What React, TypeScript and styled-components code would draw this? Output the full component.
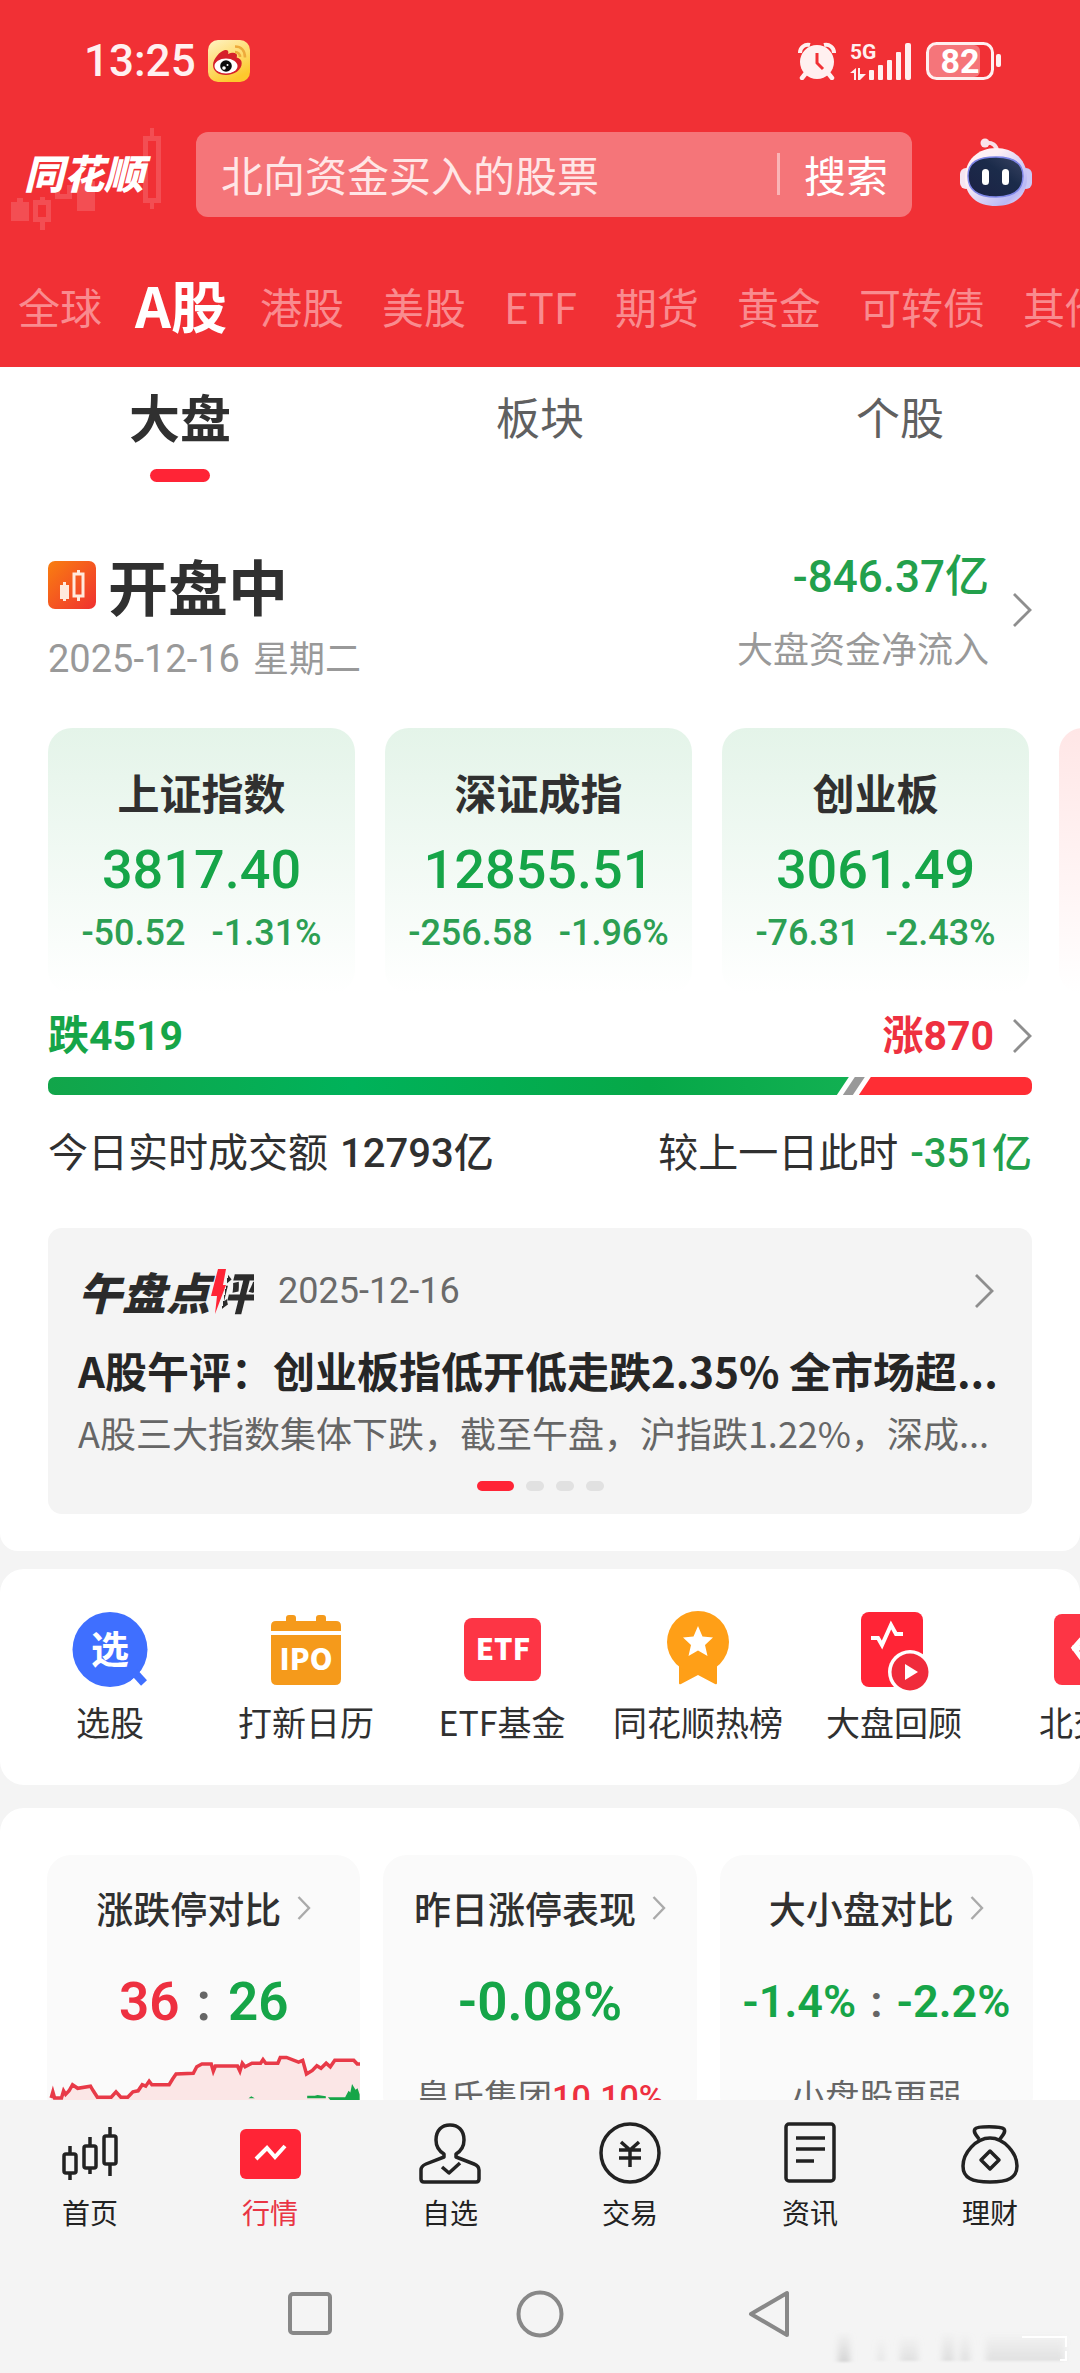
import React from 'react';
import styled, { createGlobalStyle, css } from 'styled-components';

const CJK = `'Noto Sans CJK SC', 'Liberation Sans', sans-serif`;
const NUM = `Roboto, 'Noto Sans CJK SC', sans-serif`;
const RED = '#ff2436';
const UP = '#ee3040';
const DOWN = '#16a548';
const INK = '#303030';

const GlobalStyle = createGlobalStyle`
  * { box-sizing: border-box; }
  body { margin: 0; background: #f4f4f4; font-family: ${CJK}; color: ${INK}; }
  button, input { font: inherit; color: inherit; border: 0; padding: 0; margin: 0; background: none; }
  button { cursor: pointer; }
  a { color: inherit; text-decoration: none; }
  h1, h2, p { margin: 0; }
  svg { display: block; }
`;

const Screen = styled.div`
  display: grid;
  grid-template-rows: auto minmax(0, 1fr) auto;
  height: 100vh;
  overflow: hidden;
`;

/* ---------- header ---------- */

const Header = styled.header`
  background: #f13035;
  color: #fff;
  overflow: hidden;
`;

const StatusBar = styled.div`
  display: flex;
  align-items: center;
  height: 122px;
  margin-bottom: 10px;
  padding: 0 77px 0 84px;
  color: #fff0f0;
`;

const Clock = styled.time`
  font: 500 44px/48px ${NUM};
  margin-right: 12px;
`;

const StatusIcons = styled.div`
  display: flex;
  align-items: center;
  gap: 14px;
  margin-left: auto;
`;

const SearchRow = styled.div`
  display: flex;
  align-items: center;
  height: 85px;
`;

const Brand = styled.a`
  position: relative;
  flex: 0 0 196px;
  padding: 0 0 6px 24px;
  font-size: 40px;
  line-height: 48px;
  font-weight: 900;
  font-style: italic;
`;

const BrandCandles = styled.svg`
  position: absolute;
  left: 0;
  top: -21px;
`;

const BrandName = styled.span`
  position: relative;
`;

const SearchForm = styled.form`
  display: flex;
  flex: 1;
  align-items: center;
  height: 85px;
  min-width: 0;
  padding: 0 24px 2px 25px;
  border-radius: 12px;
  background: #f57579;
  font-size: 42px;
  line-height: 60px;
`;

const SearchInput = styled.input`
  flex: 1;
  min-width: 0;
  outline: none;
  &::placeholder { color: #ffe6e6; opacity: 1; }
`;

const SearchButton = styled.button`
  display: flex;
  align-items: center;
  &::before {
    content: '';
    width: 3px;
    height: 42px;
    margin-right: 24px;
    background: #fab4b6;
  }
`;

const RobotButton = styled.button`
  display: flex;
  flex: 0 0 168px;
  justify-content: center;
  padding-bottom: 6px;
`;

const MarketTabs = styled.nav`
  display: flex;
  align-items: center;
  gap: 38px;
  height: 150px;
  padding: 28px 0 0 18px;
  white-space: nowrap;
`;

const MarketTab = styled.button<{ $active?: boolean }>`
  flex: none;
  font-size: 42px;
  line-height: 60px;
  color: #f98b8f;
  ${(p) => p.$active && css`
    margin: 0 -5px;
    padding-bottom: 4px;
    font-size: 56px;
    font-weight: 700;
    color: #fff;
  `}
`;

/* ---------- content ---------- */

const Content = styled.main`
  overflow: hidden;
`;

const Overview = styled.section`
  padding-bottom: 37px;
  border-radius: 0 0 18px 18px;
  background: #fff;
`;

const SubTabs = styled.nav`
  display: grid;
  grid-template-columns: repeat(3, 1fr);
`;

const SubTab = styled.button<{ $active?: boolean }>`
  display: flex;
  flex-direction: column;
  align-items: center;
  padding-top: 19px;
  font-size: ${(p) => (p.$active ? 51 : 44)}px;
  line-height: 60px;
  font-weight: ${(p) => (p.$active ? 700 : 400)};
  color: ${(p) => (p.$active ? INK : '#606060')};
  &::after {
    content: '';
    width: 60px;
    height: 13px;
    margin-top: 23px;
    border-radius: 7px;
    background: ${(p) => (p.$active ? RED : 'transparent')};
  }
`;

const SessionRow = styled.div`
  display: flex;
  align-items: flex-start;
  justify-content: space-between;
  padding: 71px 48px 49px;
`;

const SessionTitle = styled.div`
  display: flex;
  align-items: center;
  gap: 12px;
  margin-bottom: 19px;
  h1 { font-size: 60px; line-height: 64px; font-weight: 700; }
`;

const Caption = styled.p`
  font: 400 36px/40px ${CJK};
  color: #999;
`;

const DateText = styled.time`
  margin-right: 5px;
  font-family: ${NUM};
  font-size: 38px;
`;

const FlowLink = styled.a`
  display: flex;
  align-items: center;
  gap: 23px;
  text-align: right;
`;

const FlowAmount = styled.p`
  margin-bottom: 26px;
  font: 500 44px/48px ${NUM};
  color: #23a04c;
`;

const IndexStrip = styled.div`
  display: flex;
  gap: 30px;
  padding-left: 48px;
  overflow: hidden;
`;

const IndexCard = styled.a<{ $rising?: boolean }>`
  flex: 0 0 calc((100vw - 159px) / 3);
  padding: 40px 0 41px;
  border-radius: 24px;
  background: linear-gradient(${(p) => (p.$rising ? '#ffe6e6' : '#e4f4e9')}, #fff);
  text-align: center;
  white-space: nowrap;
`;

const IndexName = styled.h2`
  font-size: 42px;
  line-height: 48px;
  font-weight: 700;
`;

const IndexValue = styled.p`
  margin: 24px 0 13px;
  font: 500 54px/60px ${NUM};
  color: ${DOWN};
`;

const IndexChange = styled.p`
  display: flex;
  justify-content: center;
  gap: 26px;
  font: 500 36px/40px ${NUM};
  color: #2c9f53;
`;

const Breadth = styled.a`
  display: block;
  padding: 20px 48px 0;
`;

const BreadthLabels = styled.div`
  display: flex;
  align-items: center;
  justify-content: space-between;
  margin-bottom: 19px;
  font: 700 41px/44px ${NUM};
`;

const Tone = styled.span<{ $up?: boolean }>`
  color: ${(p) => (p.$up ? UP : DOWN)};
`;

const RisingLabel = styled.span`
  display: flex;
  align-items: center;
  gap: 18px;
`;

const BreadthBar = styled.div`
  display: flex;
  height: 18px;
  border-radius: 7px;
  overflow: hidden;
`;

const FallingPart = styled.i`
  flex: 800 1 0;
  background: linear-gradient(90deg, #12a54a, #00b25a 38%, #06a848 75%, #12b052);
  clip-path: polygon(0 0, 100% 0, calc(100% - 12px) 100%, 0 100%);
`;

const FlatPart = styled.i`
  flex: none;
  width: 22px;
  margin: 0 -6px;
  background: #999;
  clip-path: polygon(12px 0, 100% 0, 10px 100%, 0 100%);
`;

const RisingPart = styled.i`
  flex: 173 1 0;
  background: #ff2d34;
  clip-path: polygon(12px 0, 100% 0, 100% 100%, 0 100%);
`;

const Turnover = styled.div`
  display: flex;
  justify-content: space-between;
  padding: 31px 48px 50px;
  font-size: 40px;
  line-height: 48px;
  white-space: nowrap;
`;

const TurnoverValue = styled.strong<{ $down?: boolean }>`
  margin-left: 3px;
  font-family: ${NUM};
  font-weight: 500;
  color: ${(p) => (p.$down ? '#23a04c' : INK)};
`;

const Review = styled.article`
  margin: 0 48px;
  padding: 39px 30px 23px;
  border-radius: 14px;
  background: #f4f4f4;
`;

const ReviewTop = styled.div`
  display: flex;
  align-items: center;
  height: 48px;
  padding-right: 8px;
`;

const ReviewMark = styled.strong`
  position: relative;
  margin-right: 24px;
  font-size: 44px;
  line-height: 48px;
  font-weight: 900;
  font-style: italic;
  color: #2b2b2b;
`;

const ReviewMarkEnd = styled.span`
  display: inline-block;
  background: linear-gradient(100deg, transparent 37%, #2b2b2b 37%);
  background-clip: text;
  -webkit-background-clip: text;
  color: transparent;
`;

const Bolt = styled.svg`
  position: absolute;
  right: 27px;
  top: 2px;
`;

const ReviewDate = styled.time`
  flex: 1;
  font: 400 36px/44px ${NUM};
  color: #6a6a6a;
`;

const Headline = styled.h2`
  margin: 31px 0 16px;
  font-size: 42px;
  line-height: 48px;
  font-weight: 700;
  white-space: nowrap;
  color: #262626;
`;

const Summary = styled.p`
  font-size: 36px;
  line-height: 44px;
  white-space: nowrap;
  color: #666;
`;

const Pager = styled.div`
  display: flex;
  justify-content: center;
  gap: 12px;
  margin-top: 27px;
`;

const Dot = styled.i<{ $active?: boolean }>`
  width: ${(p) => (p.$active ? 37 : 18)}px;
  height: 10px;
  border-radius: 5px;
  background: ${(p) => (p.$active ? RED : '#e1e1e1')};
`;

const QuickPanel = styled.nav`
  display: flex;
  margin-top: 18px;
  padding: 41px 0 41px 12px;
  border-radius: 24px;
  background: #fff;
  overflow: hidden;
`;

const QuickLink = styled.a`
  display: flex;
  flex: 0 0 calc((100vw - 100px) / 5);
  flex-direction: column;
  align-items: center;
  gap: 10px;
  font-size: 34px;
  line-height: 44px;
  white-space: nowrap;
`;

const MetricPanel = styled.section`
  display: grid;
  grid-template-columns: repeat(3, minmax(0, 1fr));
  gap: 23px;
  margin-top: 23px;
  padding: 47px 47px 60px;
  border-radius: 24px 24px 0 0;
  background: #fff;
`;

const MetricCard = styled.a`
  display: flex;
  flex-direction: column;
  align-items: center;
  padding-top: 31px;
  border-radius: 24px;
  background: #fafafa;
  white-space: nowrap;
`;

const MetricTitle = styled.h2`
  display: flex;
  align-items: center;
  gap: 16px;
  font-size: 37px;
  line-height: 44px;
  font-weight: 500;
`;

const MetricValue = styled.p<{ $small?: boolean }>`
  display: flex;
  gap: ${(p) => (p.$small ? 14 : 17)}px;
  margin-top: 42px;
  font: 600 ${(p) => (p.$small ? 45 : 53)}px/60px ${NUM};
  color: #666;
`;

const MetricNote = styled.p`
  margin-top: 41px;
  font-size: 34px;
  line-height: 44px;
  color: #666;
  strong { font-family: ${NUM}; font-weight: 500; color: ${UP}; }
`;

const TrendChart = styled.svg`
  width: 100%;
  height: 66px;
  margin-top: 19px;
`;

/* ---------- bottom ---------- */

const Footer = styled.footer`
  position: relative;
  background: #f4f4f4;
`;

const TabBar = styled.nav`
  display: grid;
  grid-template-columns: repeat(6, 1fr);
  padding-top: 21px;
`;

const TabItem = styled.a<{ $active?: boolean }>`
  display: flex;
  flex-direction: column;
  align-items: center;
  gap: 11px;
  font-size: 28px;
  line-height: 32px;
  color: ${(p) => (p.$active ? '#e93544' : '#222')};
`;

const SystemBar = styled.div`
  display: flex;
  justify-content: center;
  gap: 182px;
  padding: 62px 0 35px;
`;

const Smudge = styled.svg`
  position: absolute;
  right: 8px;
  bottom: 8px;
`;

/* ---------- drawings ---------- */

const Chevron = ({ small }: { small?: boolean }) => small ? (
  <svg width="14" height="24" viewBox="0 0 14 24" fill="none" stroke="#aaa" strokeWidth="2.4"><path d="M1.5 1 12 12 1.5 23" /></svg>
) : (
  <svg width="20" height="34" viewBox="0 0 20 34" fill="none" stroke="#8e8e8e" strokeWidth="2.8"><path d="M2 1 18 17 2 33" /></svg>
);

const WeiboIcon = () => (
  <svg width="42" height="42" viewBox="0 0 42 42">
    <defs><linearGradient id="wb" x1="0" y1="0" x2="0.5" y2="1"><stop offset="0" stopColor="#fff3c4" /><stop offset="1" stopColor="#fdc92d" /></linearGradient></defs>
    <rect width="42" height="42" rx="10" fill="url(#wb)" />
    <path d="M5 25c0-6 7-14 12-15 3-.6 4 1.500 3 4 4-2 9-2 9 1.500 0 1-.3 1.500-.3 2 3 .8 5 2.500 5 5.500C34 30 26 35 18 35 10 35 5 31 5 25Z" fill="#d6202a" />
    <ellipse cx="18" cy="26" rx="11.500" ry="7.500" fill="#fff" />
    <circle cx="18" cy="26" r="5.800" fill="#0a0a0a" /><circle cx="16" cy="28" r="1.800" fill="#fff" /><circle cx="19.500" cy="25" r="1" fill="#fff" />
    <path d="M27 6.500c6 0 10 4 10 11M27 12c3 0 5 2 5 5" fill="none" stroke="#edaa3c" strokeWidth="2.600" />
  </svg>
);

const AlarmIcon = () => (
  <svg width="38" height="38" viewBox="0 0 38 38" fill="none">
    <path d="M2 11A8 8 0 0 1 12 3M36 11A8 8 0 0 0 26 3" stroke="#fff0f0" strokeWidth="4" />
    <circle cx="19" cy="20" r="17" fill="#fff0f0" />
    <path d="m8 31-4 5M30 31l4 5" stroke="#fff0f0" strokeWidth="4.500" strokeLinecap="round" />
    <path d="M19 11v10l6 6" stroke="#f13035" strokeWidth="3" />
  </svg>
);

const SignalIcon = () => (
  <svg width="62" height="40" viewBox="0 0 62 40" fill="#fff0f0">
    <text x="0" y="18" fontFamily="Roboto, sans-serif" fontWeight="700" fontSize="21">5G</text>
    <path d="M0 32 6 27v12H4v-7ZM8 27h2v6h6l-6 6H8Z" />
    <rect x="19" y="29" width="5" height="10" rx="1" /><rect x="28" y="24" width="5" height="15" rx="1" />
    <rect x="37" y="19" width="5" height="20" rx="1" /><rect x="46" y="11" width="5" height="28" rx="1" /><rect x="55" y="2" width="6" height="37" rx="2" />
  </svg>
);

const BatteryIcon = () => (
  <svg width="77" height="38" viewBox="0 0 77 38">
    <rect x="3" y="3" width="51" height="32" rx="6" fill="#f5757a" />
    <rect x="1.500" y="1.500" width="65" height="35" rx="9" fill="none" stroke="#fff0f0" strokeWidth="3" />
    <rect x="70" y="12" width="5" height="13" rx="2" fill="#fff0f0" />
    <text x="34" y="31" textAnchor="middle" fontFamily="Roboto, sans-serif" fontWeight="700" fontSize="34" fill="#fff">82</text>
  </svg>
);

const RobotIcon = () => (
  <svg width="74" height="70" viewBox="0 0 74 70">
    <defs>
      <linearGradient id="rb" x1="0" y1="0" x2="1" y2="1"><stop offset="0.300" stopColor="#fff0f5" /><stop offset="0.800" stopColor="#b9b8f5" /><stop offset="1" stopColor="#fbe3ee" /></linearGradient>
      <linearGradient id="rv" x1="0" y1="1" x2="1" y2="0"><stop offset="0" stopColor="#1c2144" /><stop offset="0.600" stopColor="#1b2b4a" /><stop offset="1" stopColor="#3a4463" /></linearGradient>
    </defs>
    <path d="M26 6c7-1 12 2 12 9" fill="none" stroke="#f8dfe8" strokeWidth="4" /><circle cx="26" cy="6" r="4.500" fill="#fae3ea" />
    <rect x="1" y="31" width="12" height="21" rx="6" fill="#f5e5f2" /><rect x="61" y="31" width="12" height="21" rx="6" fill="#cbc8f6" />
    <path d="M37 11C55 11 68 23 68 41S56 69 37 69 6 59 6 41 19 11 37 11Z" fill="url(#rb)" />
    <path d="M37 20c18 0 27 6 27 19s-8 21-27 21S9 53 9 39s10-19 28-19Z" fill="url(#rv)" stroke="#7f86e8" strokeWidth="1.500" />
    <rect x="23" y="32" width="7" height="16" rx="3.500" fill="#fff" /><rect x="43" y="32" width="7" height="16" rx="3.500" fill="#fff" />
  </svg>
);

const CandlesIcon = () => (
  <svg width="48" height="48" viewBox="0 0 48 48">
    <defs><linearGradient id="cd" x1="0" y1="0" x2="1" y2="1"><stop offset="0" stopColor="#f97f10" /><stop offset="1" stopColor="#f03030" /></linearGradient></defs>
    <rect width="48" height="48" rx="7" fill="url(#cd)" />
    <path d="M12 24h9v14h-9ZM15 21h3v19h-3ZM29 9h3v4h-3ZM29 36h3v4h-3Z" fill="#ffe9dc" />
    <rect x="26" y="13" width="9" height="22" fill="none" stroke="#ffe9dc" strokeWidth="3" />
  </svg>
);

const iconText = { fontFamily: "'Noto Sans CJK SC', sans-serif", textAnchor: 'middle' as const, fill: '#fff' };

const QuickPickIcon = () => (
  <svg width="80" height="80" viewBox="0 0 80 80">
    <ellipse cx="40" cy="39.500" rx="37.500" ry="37.500" fill="#3f6fff" />
    <path d="m66 66 8 8" stroke="#fff" strokeWidth="14" /><path d="m64 62 10 11" stroke="#3f6fff" strokeWidth="8" />
    <text x="40" y="53" fontWeight="700" fontSize="38" {...iconText}>选</text>
  </svg>
);
const IpoIcon = () => (
  <svg width="80" height="80" viewBox="0 0 80 80">
    <path d="M5 21v-5q0-5 5-5h10V8q0-3 3-3h4q3 0 3 3v3h20V8q0-3 3-3h4q3 0 3 3v3h10q5 0 5 5v5Z" fill="#f59a1b" />
    <path d="M5 25h70v44q0 6-6 6H11q-6 0-6-6Z" fill="#f59a1b" />
    <text x="40" y="60" fontWeight="900" fontSize="29" {...iconText}>IPO</text>
  </svg>
);
const EtfIcon = () => (
  <svg width="80" height="80" viewBox="0 0 80 80">
    <rect x="2" y="8" width="77" height="63" rx="8" fill="#fd3545" />
    <text x="41" y="50" fontWeight="900" fontSize="29" {...iconText}>ETF</text>
  </svg>
);
const MedalIcon = () => (
  <svg width="80" height="80" viewBox="0 0 80 80">
    <path d="M21 50v23q0 2 2 1l17-9 17 9q2 1 2-1V50Z" fill="#ff9f17" /><circle cx="40" cy="32" r="31" fill="#ff9f17" />
    <path d="m40 16 4.500 10.500L55 27.500l-8 7.500 2.500 11L40 40.500 30.500 46 33 35l-8-7.500 10.500-1Z" fill="#fff" />
  </svg>
);
const ReplayIcon = () => (
  <svg width="80" height="80" viewBox="0 0 80 80" overflow="visible">
    <rect x="7" y="2" width="62" height="75" rx="8" fill="#ff2436" />
    <path d="M17 28h7l4 7 9-20 5 9h7" fill="none" stroke="#fff" strokeWidth="4" />
    <circle cx="56" cy="62" r="22" fill="#fff" /><circle cx="56" cy="62" r="18.500" fill="#f02b3b" />
    <path d="m51 54 13 8-13 8Z" fill="#fff" />
  </svg>
);
const NorthIcon = () => (
  <svg width="80" height="80" viewBox="0 0 80 80">
    <rect x="4" y="4" width="72" height="71" rx="8" fill="#fd3545" />
    <path d="M38 22 24 38l14 19M22 38h16" fill="none" stroke="#fff" strokeWidth="5" />
  </svg>
);

const line = { fill: 'none', stroke: '#222', strokeWidth: 3.5, strokeLinejoin: 'round' as const };
const box = { width: 64, height: 64, viewBox: '0 0 64 64' };

const HomeIcon = () => (
  <svg {...box} {...line}>
    <rect x="6" y="33" width="12" height="19" rx="2" /><path d="M12 25v8M12 52v7" />
    <rect x="26" y="25" width="12" height="22" rx="2" /><path d="M32 16v9M32 47v6" />
    <rect x="46" y="15" width="12" height="28" rx="2" /><path d="M52 6v9M52 43v12" />
  </svg>
);
const QuoteIcon = () => (
  <svg {...box}>
    <rect x="2" y="8" width="61" height="50" rx="6" fill={RED} />
    <path d="m18 38 11-11 8 9 10-11" fill="none" stroke="#fff" strokeWidth="4" />
  </svg>
);
const PersonIcon = () => (
  <svg {...box} {...line}>
    <path d="M26 33c-5-3-8-8-8-14C18 9 24 4 32 4s14 5 14 15c0 6-3 11-8 14v3l18 7q5 2 5 6v9q0 3-3 3H6q-3 0-3-3v-9q0-4 5-6l18-7Z" />
    <path d="m24 46 7 6 11-10" />
  </svg>
);
const TradeIcon = () => (
  <svg {...box} {...line}>
    <circle cx="32" cy="32" r="29" /><path d="m23 21 9 8 9-8M21 29h22M21 37h22M32 29v17" />
  </svg>
);
const NewsIcon = () => (
  <svg {...box} {...line}>
    <rect x="8" y="3" width="48" height="57" rx="3" /><path d="M18 17h29M18 28h29M18 40h18" />
  </svg>
);
const WealthIcon = () => (
  <svg {...box} {...line}>
    <path d="M21 18c-3-4-6-7-4-10 2-3 26-3 29 0 2 3-1 6-4 10M32 17c14 0 27 15 27 28 0 12-9 16-27 16S5 57 5 45c0-13 13-28 27-28Z" />
    <path d="m32 30 9 9-9 9-9-9Z" />
  </svg>
);

const indices = [
  { name: '上证指数', value: '3817.40', diff: '-50.52', pct: '-1.31%' },
  { name: '深证成指', value: '12855.51', diff: '-256.58', pct: '-1.96%' },
  { name: '创业板', value: '3061.49', diff: '-76.31', pct: '-2.43%' },
];

const quickLinks = [
  { label: '选股', Icon: QuickPickIcon },
  { label: '打新日历', Icon: IpoIcon },
  { label: 'ETF基金', Icon: EtfIcon },
  { label: '同花顺热榜', Icon: MedalIcon },
  { label: '大盘回顾', Icon: ReplayIcon },
  { label: '北交所', Icon: NorthIcon },
];

const tabs = [
  { label: '首页', Icon: HomeIcon },
  { label: '行情', Icon: QuoteIcon, active: true },
  { label: '自选', Icon: PersonIcon },
  { label: '交易', Icon: TradeIcon },
  { label: '资讯', Icon: NewsIcon },
  { label: '理财', Icon: WealthIcon },
];

const trend = 'M148 805 153 788 158 805H178L184 785 190 795 200 785 210 768 225 778 262 772 270 785 282 803H322L336 788 350 803H370L385 788 400 785 412 768 422 772 432 758 440 768H490L500 752 510 738 560 736 570 718 585 710H612L618 730 624 716H688L695 730 702 708 710 718 730 708H755L762 698 770 708H805L812 692H830L865 705 877 700 888 738 905 728 918 715 930 722 945 708 957 718 970 700H1025L1035 710H1044';

export default function App() {
  return (
    <Screen>
      <GlobalStyle />
      <Header>
        <StatusBar>
          <Clock>13:25</Clock>
          <WeiboIcon />
          <StatusIcons><AlarmIcon /><SignalIcon /><BatteryIcon /></StatusIcons>
        </StatusBar>
        <SearchRow>
          <Brand href="#">
            <BrandCandles width="170" height="86" viewBox="0 126 170 86" fill="#fff" fillOpacity="0.15" overflow="visible">
              <path d="M11 201h18v19H11ZM17 197h6v4h-6ZM77 180h18v30H77ZM55 184h5v9h7v-9h5v14H55ZM40 196h5v3h-5ZM40 221h5v8h-5ZM150 127h4v8h-4ZM150 202h4v6h-4Z" />
              <path fillRule="evenodd" d="M33 199h18v22H33ZM38 204v12h8v-12ZM143 135h18v67h-18ZM148 140v57h8v-57Z" />
            </BrandCandles>
            <BrandName>同花顺</BrandName>
          </Brand>
          <SearchForm onSubmit={(e) => e.preventDefault()}>
            <SearchInput aria-label="搜索" placeholder="北向资金买入的股票" />
            <SearchButton type="submit">搜索</SearchButton>
          </SearchForm>
          <RobotButton aria-label="智能助手"><RobotIcon /></RobotButton>
        </SearchRow>
        <MarketTabs>
          {['全球', 'A股', '港股', '美股', 'ETF', '期货', '黄金', '可转债', '其他'].map((t) => (
            <MarketTab key={t} $active={t === 'A股'}>{t}</MarketTab>
          ))}
        </MarketTabs>
      </Header>

      <Content>
        <Overview>
          <SubTabs>
            <SubTab $active>大盘</SubTab>
            <SubTab>板块</SubTab>
            <SubTab>个股</SubTab>
          </SubTabs>

          <SessionRow>
            <div>
              <SessionTitle><CandlesIcon /><h1>开盘中</h1></SessionTitle>
              <Caption><DateText>2025-12-16</DateText> 星期二</Caption>
            </div>
            <FlowLink href="#">
              <div>
                <FlowAmount>-846.37亿</FlowAmount>
                <Caption>大盘资金净流入</Caption>
              </div>
              <Chevron />
            </FlowLink>
          </SessionRow>

          <IndexStrip>
            {indices.map((x) => (
              <IndexCard key={x.name} href="#">
                <IndexName>{x.name}</IndexName>
                <IndexValue>{x.value}</IndexValue>
                <IndexChange><span>{x.diff}</span><span>{x.pct}</span></IndexChange>
              </IndexCard>
            ))}
            <IndexCard $rising href="#" aria-label="更多指数" />
          </IndexStrip>

          <Breadth href="#">
            <BreadthLabels>
              <Tone>跌4519</Tone>
              <RisingLabel><Tone $up>涨870</Tone><Chevron /></RisingLabel>
            </BreadthLabels>
            <BreadthBar><FallingPart /><FlatPart /><RisingPart /></BreadthBar>
          </Breadth>

          <Turnover>
            <span>今日实时成交额 <TurnoverValue>12793亿</TurnoverValue></span>
            <span>较上一日此时 <TurnoverValue $down>-351亿</TurnoverValue></span>
          </Turnover>

          <Review>
            <ReviewTop>
              <ReviewMark>
                午盘点<ReviewMarkEnd>评</ReviewMarkEnd>
                <Bolt width="16" height="45" viewBox="0 0 16 45" fill={RED}><path d="M7 0h8l-3 16h3L4 45l2-18H0Z" /></Bolt>
              </ReviewMark>
              <ReviewDate>2025-12-16</ReviewDate>
              <Chevron />
            </ReviewTop>
            <Headline>A股午评：创业板指低开低走跌2.35% 全市场超...</Headline>
            <Summary>A股三大指数集体下跌，截至午盘，沪指跌1.22%，深成...</Summary>
            <Pager><Dot $active /><Dot /><Dot /><Dot /></Pager>
          </Review>
        </Overview>

        <QuickPanel>
          {quickLinks.map(({ label, Icon }) => (
            <QuickLink key={label} href="#"><Icon />{label}</QuickLink>
          ))}
        </QuickPanel>

        <MetricPanel>
          <MetricCard href="#">
            <MetricTitle>涨跌停对比<Chevron small /></MetricTitle>
            <MetricValue><Tone $up>36</Tone>:<Tone>26</Tone></MetricValue>
            <TrendChart viewBox="136 674 908 184" preserveAspectRatio="none">
              <path d={`${trend}V858H148Z`} fill="#fbe6e6" />
              <path d={trend} fill="none" stroke="#e83a48" strokeWidth="3.5" vectorEffect="non-scaling-stroke" />
              <path d="M720 806 728 800 738 806ZM890 806V799H912L920 797 944 800V806ZM950 803H1000L1010 785 1015 790 1020 766 1030 782 1036 778 1042 795V858H1000Z" fill="#16a548" />
            </TrendChart>
          </MetricCard>
          <MetricCard href="#">
            <MetricTitle>昨日涨停表现<Chevron small /></MetricTitle>
            <MetricValue><Tone>-0.08%</Tone></MetricValue>
            <MetricNote>皇氏集团<strong>10.10%</strong></MetricNote>
          </MetricCard>
          <MetricCard href="#">
            <MetricTitle>大小盘对比<Chevron small /></MetricTitle>
            <MetricValue $small><Tone>-1.4%</Tone>:<Tone>-2.2%</Tone></MetricValue>
            <MetricNote>小盘股更弱</MetricNote>
          </MetricCard>
        </MetricPanel>
      </Content>

      <Footer>
        <TabBar>
          {tabs.map(({ label, Icon, active }) => (
            <TabItem key={label} href="#" $active={active}><Icon />{label}</TabItem>
          ))}
        </TabBar>
        <SystemBar>
          <button aria-label="最近任务">
            <svg width="48" height="48" viewBox="0 0 48 48" fill="none" stroke="#888" strokeWidth="4"><rect x="4" y="4" width="40" height="39" rx="3" /></svg>
          </button>
          <button aria-label="主屏幕">
            <svg width="48" height="48" viewBox="0 0 48 48" fill="none" stroke="#888" strokeWidth="4"><circle cx="24" cy="24" r="21.500" /></svg>
          </button>
          <button aria-label="返回">
            <svg width="48" height="48" viewBox="0 0 48 48" fill="none" stroke="#888" strokeWidth="4" strokeLinejoin="round"><path d="M5 24 41 3v42Z" /></svg>
          </button>
        </SystemBar>
        <Smudge width="240" height="38" viewBox="0 0 240 38">
          <defs>
            <linearGradient id="sm" x1="0" y1="0" x2="0" y2="1"><stop offset="0" stopColor="#ccc" stopOpacity="0" /><stop offset="1" stopColor="#ccc" stopOpacity="0.800" /></linearGradient>
            <filter id="soft"><feGaussianBlur stdDeviation="3 1" /></filter>
          </defs>
          <g fill="url(#sm)" filter="url(#soft)">
            <rect x="6" y="4" width="12" height="31" /><rect x="46" y="10" width="6" height="24" opacity="0.500" /><rect x="68" y="8" width="18" height="26" opacity="0.600" />
            <rect x="110" y="4" width="12" height="30" opacity="0.700" /><rect x="128" y="6" width="10" height="28" opacity="0.600" /><rect x="154" y="6" width="78" height="28" opacity="0.600" />
          </g>
          <path d="M190 10h44v10M234 24v9h-6" fill="none" stroke="#fff" strokeWidth="2" />
        </Smudge>
      </Footer>
    </Screen>
  );
}
